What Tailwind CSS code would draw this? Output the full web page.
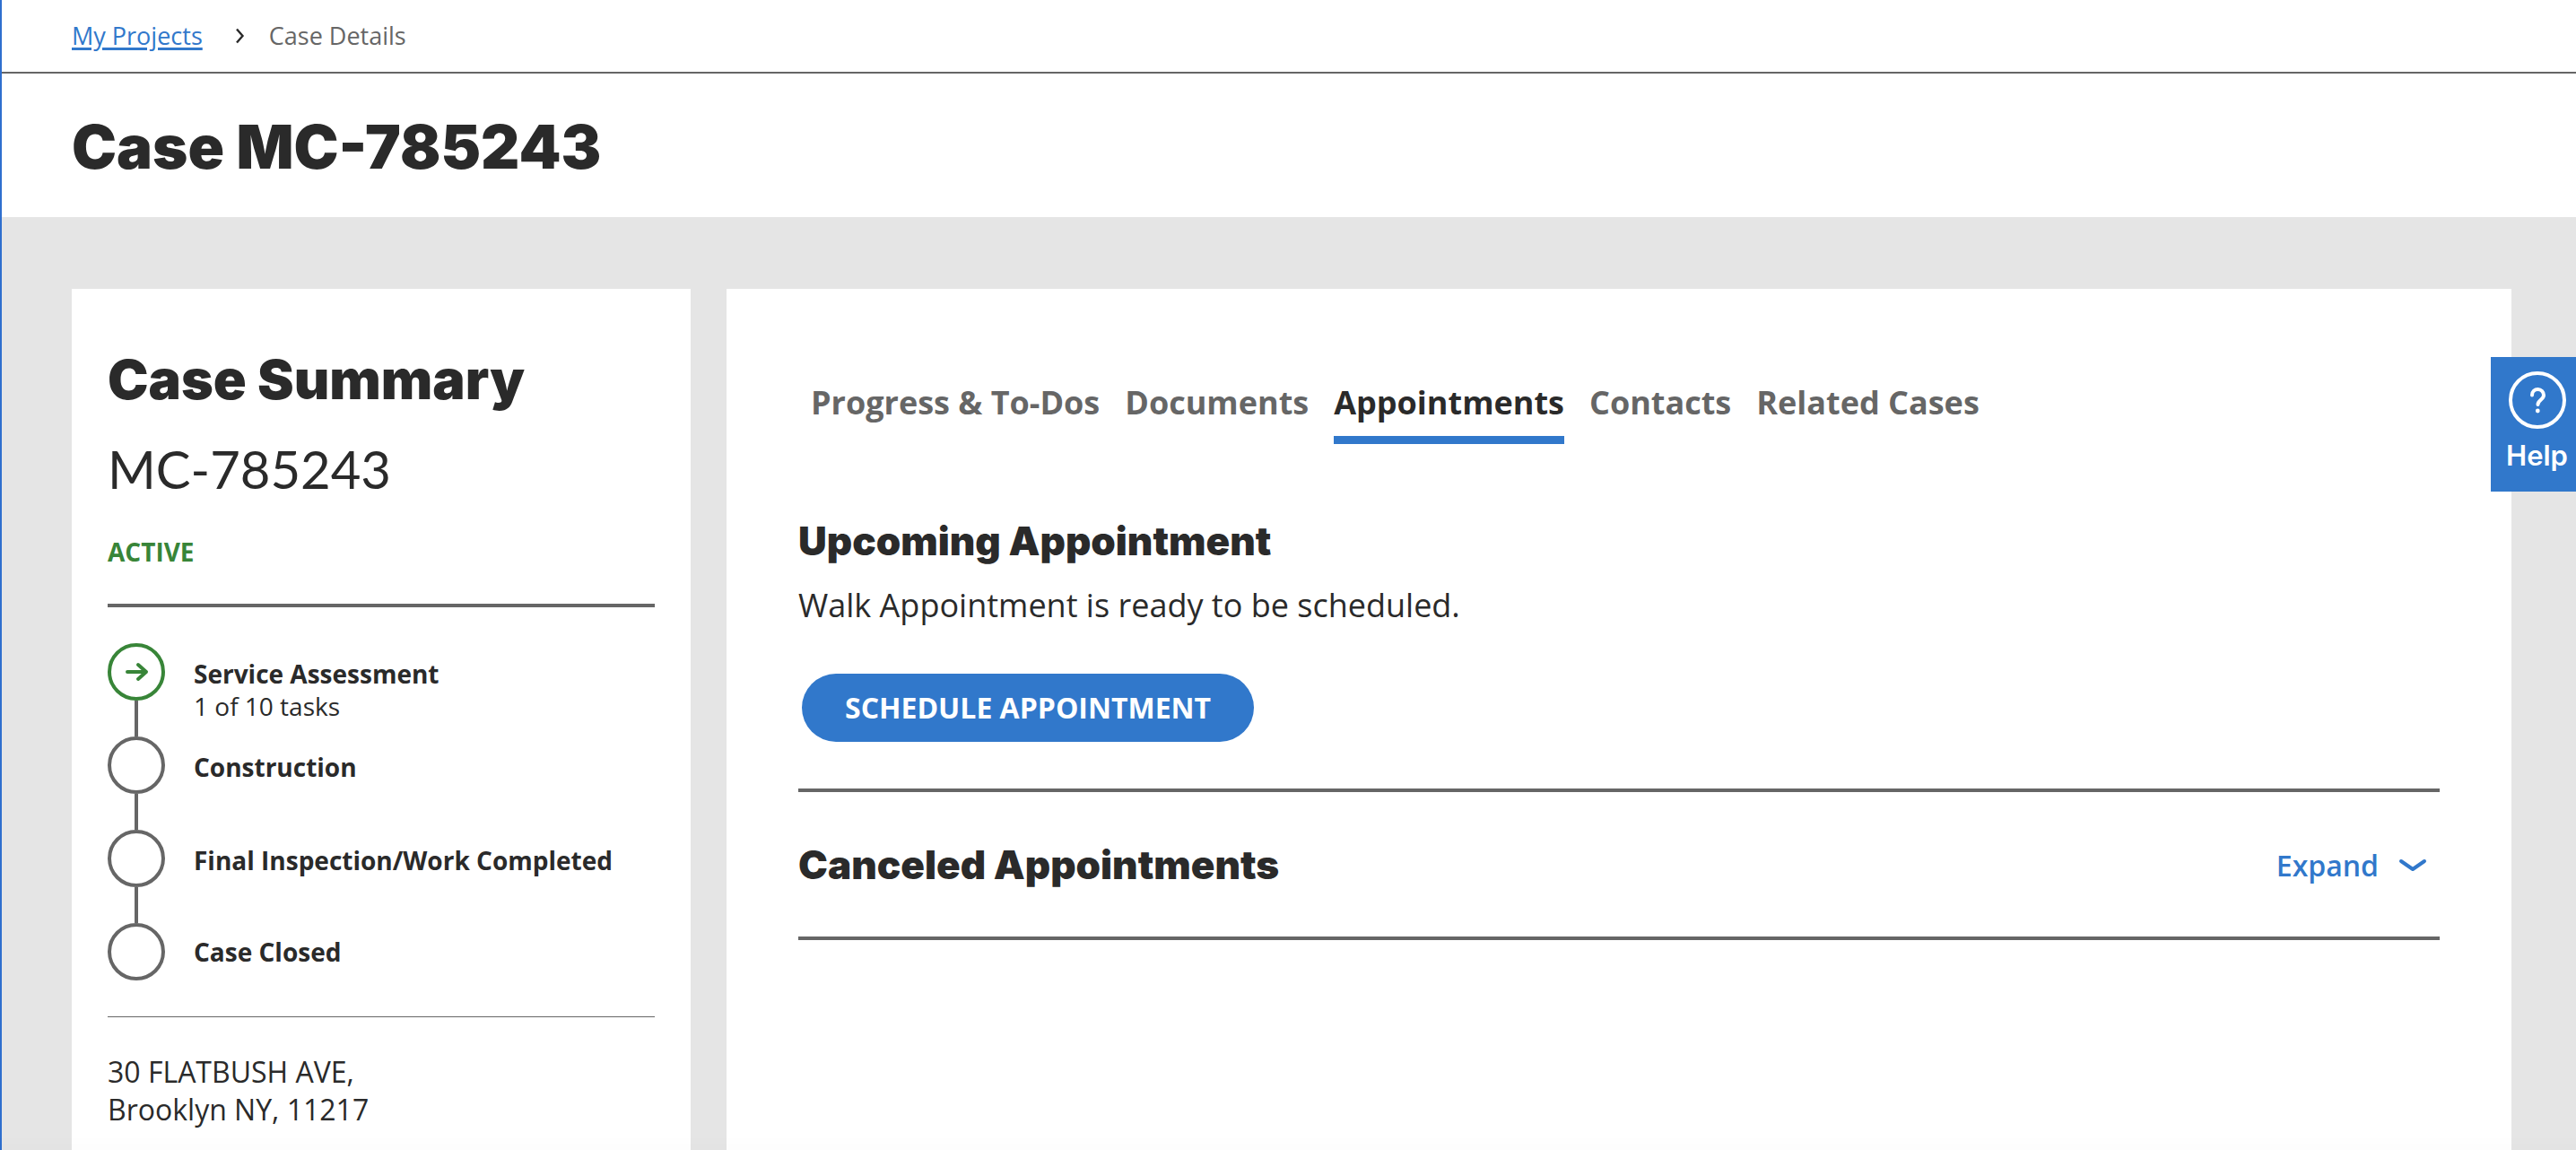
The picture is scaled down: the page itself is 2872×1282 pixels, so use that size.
<!DOCTYPE html>
<html lang="en">
<head>
<meta charset="utf-8">
<meta name="viewport" content="width=device-width, initial-scale=1">
<title>Case MC-785243</title>
<script src="https://cdn.jsdelivr.net/npm/@tailwindcss/browser@4"></script>
</head>
<body class="bg-white font-['Open_Sans',sans-serif] text-[#2a2a2a]">
<div class="flex min-h-screen flex-col border-l-2 border-[#2f6fce]">
  <nav aria-label="Breadcrumb" class="flex h-[82px] items-center border-b-2 border-[#666] pl-[78px] text-[27px] leading-9">
    <a href="#" class="text-[#3178cb] underline decoration-3 underline-offset-3">My Projects</a>
    <svg class="ml-8 mr-[22px] h-5 w-5" viewBox="0 0 20 20" fill="none" stroke="#2a2a2a" stroke-width="2.4" aria-hidden="true"><path d="M6 2.500l6.500 7.500-6.500 7.500"/></svg>
    <span class="text-[#666]">Case Details</span>
  </nav>
  <header class="flex h-40 items-center pl-[78px] pt-1">
    <h1 class="font-['Inter',sans-serif] text-[67px] font-black leading-20">Case MC-785243</h1>
  </header>
  <main class="flex grow gap-10 bg-[#e5e5e5] pl-[78px] pr-[72px] pt-20">
    <aside class="w-[690px] shrink-0 bg-white px-10 pb-8 pt-16">
      <h2 class="font-['Inter',sans-serif] text-[61px] font-black leading-[74px]">Case Summary</h2>
      <p class="mt-[27px] font-['Lato',sans-serif] text-[58px] leading-[72px]">MC-785243</p>
      <p class="mt-[38px] text-[28px] font-bold leading-9 text-[#388538]">ACTIVE</p>
      <hr class="mt-10 border-t-4 border-[#666]">
      <ol class="mt-10 text-[28px] leading-9">
        <li class="flex gap-8">
          <div class="flex h-[104px] w-16 flex-col items-center">
            <svg class="h-16 w-16" viewBox="0 0 64 64" fill="none" stroke="#388538" stroke-width="4" stroke-linecap="round" stroke-linejoin="round" aria-hidden="true"><circle cx="32" cy="32" r="30"/><path d="M22 32h21M34 24l9 8-9 8"/></svg>
            <span class="w-1 grow bg-[#666]"></span>
          </div>
          <div class="pt-4"><p class="font-bold">Service Assessment</p><p>1 of 10 tasks</p></div>
        </li>
        <li class="flex gap-8">
          <div class="flex h-[104px] w-16 flex-col items-center">
            <span class="h-16 w-16 rounded-full border-4 border-[#666]"></span>
            <span class="w-1 grow bg-[#666]"></span>
          </div>
          <p class="pt-4 font-bold">Construction</p>
        </li>
        <li class="flex gap-8">
          <div class="flex h-[104px] w-16 flex-col items-center">
            <span class="h-16 w-16 rounded-full border-4 border-[#666]"></span>
            <span class="w-1 grow bg-[#666]"></span>
          </div>
          <p class="pt-4 font-bold">Final Inspection/Work Completed</p>
        </li>
        <li class="flex items-center gap-8">
          <span class="h-16 w-16 rounded-full border-4 border-[#666]"></span>
          <p class="font-bold">Case Closed</p>
        </li>
      </ol>
      <hr class="mt-10 border-t border-[#666]">
      <address class="mt-10 text-[32px] not-italic leading-[42px]">30 FLATBUSH AVE,<br>Brooklyn NY, 11217</address>
    </aside>
    <section class="min-w-0 grow bg-white px-20 pt-[103px]">
      <nav aria-label="Case sections" class="flex gap-7 pl-[14px] text-[36px] font-bold leading-[48px] text-[#666]">
        <a href="#" class="border-b-9 border-transparent pb-[13px]">Progress &amp; To-Dos</a>
        <a href="#" class="border-b-9 border-transparent pb-[13px]">Documents</a>
        <a href="#" aria-current="page" class="border-b-9 border-[#3178cb] pb-[13px] text-[#2a2a2a]">Appointments</a>
        <a href="#" class="border-b-9 border-transparent pb-[13px]">Contacts</a>
        <a href="#" class="border-b-9 border-transparent pb-[13px]">Related Cases</a>
      </nav>
      <h2 class="mt-[78px] font-['Inter',sans-serif] text-[44px] font-black leading-15">Upcoming Appointment</h2>
      <p class="mt-[18px] text-[36px] leading-[48px]">Walk Appointment is ready to be scheduled.</p>
      <button type="button" class="ml-1 mt-[52px] h-[76px] rounded-full bg-[#3178cb] px-12 text-[32px] font-bold leading-10 text-white">SCHEDULE APPOINTMENT</button>
      <div class="mt-[52px] flex items-center justify-between border-y-4 border-[#666] pb-[50px] pt-[51px]">
        <h2 class="font-['Inter',sans-serif] text-[44px] font-black leading-15">Canceled Appointments</h2>
        <button type="button" aria-expanded="false" class="flex items-center gap-[22px] pr-[14px] pt-[2px] text-[32px] font-semibold leading-10 text-[#3178cb]">
          Expand
          <svg class="h-4 w-8" viewBox="0 0 32 16" fill="none" stroke="currentColor" stroke-width="4" stroke-linecap="round" stroke-linejoin="round" aria-hidden="true"><path d="M3 3l13 9 13-9"/></svg>
        </button>
      </div>
    </section>
  </main>
</div>
<button type="button" class="fixed right-0 top-[398px] flex h-[150px] w-[95px] flex-col items-center bg-[#3178cb] pl-2 pt-4 font-['Inter',sans-serif] text-[31px] font-semibold leading-9 text-white">
  <svg class="h-16 w-16 shrink-0" viewBox="0 0 64 64" fill="none" stroke="currentColor" stroke-width="4" stroke-linecap="round" stroke-linejoin="round" aria-hidden="true"><circle cx="32" cy="32" r="30"/><path d="M26 26.500c0-4 3-6.500 6.500-6.500s6.500 3 6.500 6.500c0 5-6.500 5.500-6.500 10.500"/><circle cx="32.300" cy="44" r="2.400" fill="currentColor" stroke="none"/></svg>
  <span class="mt-3">Help</span>
</button>
<div class="pointer-events-none fixed inset-x-0 bottom-0 h-4 bg-linear-to-b from-transparent to-black/1"></div>
</body>
</html>
